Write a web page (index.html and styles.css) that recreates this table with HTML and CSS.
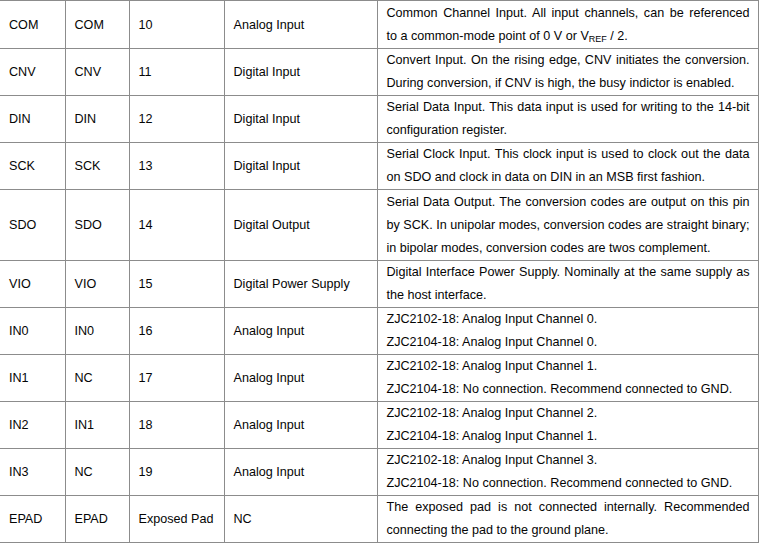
FILE: index.html
```html
<!DOCTYPE html>
<html lang="en">
<head>
    <meta charset="UTF-8">
    <title>Pin Descriptions</title>
    <link rel="stylesheet" href="styles.css">
</head>
<body>

    <table class="pins">
        <colgroup>
            <col class="c-name">
            <col class="c-alt">
            <col class="c-num">
            <col class="c-type">
            <col class="c-desc">
        </colgroup>
        <tbody>
            <tr>
                <td>COM</td>
                <td>COM</td>
                <td>10</td>
                <td>Analog Input</td>
                <td class="desc">Common Channel Input. All input channels, can be referenced to&nbsp;a common-mode point of 0 V or V<sub>REF</sub> / 2.</td>
            </tr>
            <tr>
                <td>CNV</td>
                <td>CNV</td>
                <td>11</td>
                <td>Digital Input</td>
                <td class="desc">Convert Input. On the rising edge, CNV initiates the conversion. During conversion, if CNV is high, the busy indictor is enabled.</td>
            </tr>
            <tr>
                <td>DIN</td>
                <td>DIN</td>
                <td>12</td>
                <td>Digital Input</td>
                <td class="desc">Serial Data Input. This data input is used for writing to the 14-bit configuration register.</td>
            </tr>
            <tr>
                <td>SCK</td>
                <td>SCK</td>
                <td>13</td>
                <td>Digital Input</td>
                <td class="desc">Serial Clock Input. This clock input is used to clock out the data on SDO and clock in data on DIN in an MSB first fashion.</td>
            </tr>
            <tr class="tall">
                <td>SDO</td>
                <td>SDO</td>
                <td>14</td>
                <td>Digital Output</td>
                <td class="desc">Serial Data Output. The conversion codes are output on this pin by SCK. In unipolar modes, conversion codes are straight binary; in bipolar modes, conversion codes are twos complement.</td>
            </tr>
            <tr>
                <td>VIO</td>
                <td>VIO</td>
                <td>15</td>
                <td>Digital Power Supply</td>
                <td class="desc">Digital Interface Power Supply. Nominally at the same supply as the host interface.</td>
            </tr>
            <tr>
                <td>IN0</td>
                <td>IN0</td>
                <td>16</td>
                <td>Analog Input</td>
                <td class="desc">ZJC2102-18: Analog Input Channel 0.<br>ZJC2104-18: Analog Input Channel 0.</td>
            </tr>
            <tr>
                <td>IN1</td>
                <td>NC</td>
                <td>17</td>
                <td>Analog Input</td>
                <td class="desc">ZJC2102-18: Analog Input Channel 1.<br>ZJC2104-18: No connection. Recommend connected to GND.</td>
            </tr>
            <tr>
                <td>IN2</td>
                <td>IN1</td>
                <td>18</td>
                <td>Analog Input</td>
                <td class="desc">ZJC2102-18: Analog Input Channel 2.<br>ZJC2104-18: Analog Input Channel 1.</td>
            </tr>
            <tr>
                <td>IN3</td>
                <td>NC</td>
                <td>19</td>
                <td>Analog Input</td>
                <td class="desc">ZJC2102-18: Analog Input Channel 3.<br>ZJC2104-18: No connection. Recommend connected to GND.</td>
            </tr>
            <tr>
                <td>EPAD</td>
                <td>EPAD</td>
                <td>Exposed Pad</td>
                <td>NC</td>
                <td class="desc">The exposed pad is not connected internally. Recommended connecting the pad to the ground plane.</td>
            </tr>
        </tbody>
    </table>

</body>
</html>
```

FILE: styles.css
```css
body {
    margin: 0;
    padding: 0;
    background: #fff;
    font-family: 'Liberation Sans', Arial, sans-serif;
    font-size: 12.6px;
    color: #050505;
}

.pins {
    border-collapse: collapse;
    table-layout: fixed;
    width: 758px;
}

.c-name { width: 65px; }
.c-alt { width: 64px; }
.c-num { width: 95px; }
.c-type { width: 153px; }
.c-desc { width: 381px; }

.pins td {
    border: 1px solid #8c8c8c;
    padding: 0 9px;
    line-height: 23px;
    vertical-align: middle;
    white-space: nowrap;
}

.pins td:first-child {
    border-left: none;
}

.pins tr:first-child td,
.pins tr.tall td {
    padding-top: 1px;
}

.pins td.desc {
    white-space: normal;
    text-align: justify;
    padding-right: 8px;
}

.pins sub {
    font-size: 9px;
    vertical-align: -2px;
    line-height: 0;
}
```
